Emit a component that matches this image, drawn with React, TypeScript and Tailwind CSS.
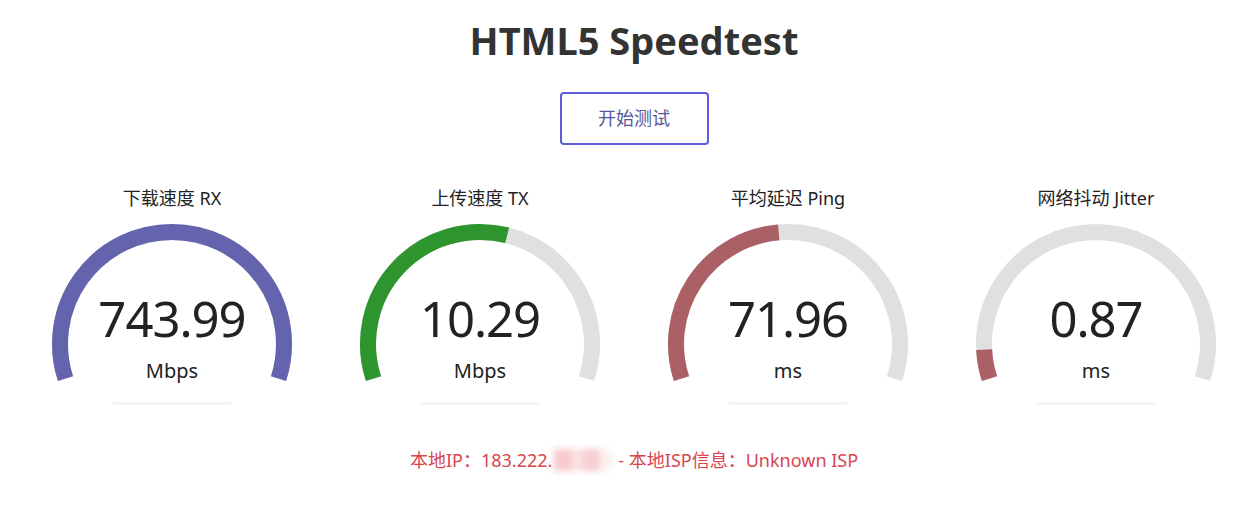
import React from 'react';

const FONT = '"Noto Sans", "Noto Sans CJK SC", sans-serif';

type Meter = {
  label: string;
  value: string;
  unit: string;
  color: string;
  fraction: number;
};

const meters: Meter[] = [
  { label: '下载速度 RX', value: '743.99', unit: 'Mbps', color: '#6464ae', fraction: 1 },
  { label: '上传速度 TX', value: '10.29', unit: 'Mbps', color: '#2e952e', fraction: 0.565 },
  { label: '平均延迟 Ping', value: '71.96', unit: 'ms', color: '#aa6064', fraction: 0.478 },
  { label: '网络抖动 Jitter', value: '0.87', unit: 'ms', color: '#aa6064', fraction: 0.07 },
];

// canvas-style angles: start at -198deg, sweep 216deg clockwise
const START = -198;
const SPAN = 216;

function arcPath(cx: number, cy: number, r: number, from: number, to: number) {
  const rad = (d: number) => (d * Math.PI) / 180;
  const x0 = cx + r * Math.cos(rad(from));
  const y0 = cy + r * Math.sin(rad(from));
  const x1 = cx + r * Math.cos(rad(to));
  const y1 = cy + r * Math.sin(rad(to));
  const large = to - from > 180 ? 1 : 0;
  return `M${x0.toFixed(2)} ${y0.toFixed(2)} A${r} ${r} 0 ${large} 1 ${x1.toFixed(2)} ${y1.toFixed(2)}`;
}

function Gauge({ meter }: { meter: Meter }) {
  const cx = 130;
  const cy = 130;
  const r = 112;
  return (
    <div className="flex w-[308px] flex-col items-center">
      <div className="text-[18px] leading-[24px] text-[#222]">{meter.label}</div>
      <div className="relative mt-[4px] h-[176px] w-[260px]">
        <svg width="260" height="176" viewBox="0 0 260 176" aria-hidden>
          <path d={arcPath(cx, cy, r, START, START + SPAN)} fill="none" stroke="#e0e0e0" strokeWidth="16" />
          <path
            d={arcPath(cx, cy, r, START, START + SPAN * meter.fraction)}
            fill="none"
            stroke={meter.color}
            strokeWidth="16"
          />
        </svg>
        <div className="absolute inset-x-0 top-[72px] text-center text-[49px] leading-[64px] tracking-[-1px] text-[#222]">
          {meter.value}
        </div>
        <div className="absolute inset-x-0 top-[143px] text-center text-[20px] leading-[28px] text-[#222]">
          {meter.unit}
        </div>
      </div>
      <div className="mt-[12px] h-[3px] w-[118px] bg-[#f4f4f7]" />
    </div>
  );
}

export default function App() {
  return (
    <div className="flex min-h-[515px] flex-col items-center bg-white pl-[12px]" style={{ fontFamily: FONT }}>
      <h1 className="pt-[14px] text-[38px] font-bold leading-[52px] text-[#333]">HTML5 Speedtest</h1>

      <button className="mt-[26px] h-[53px] w-[149px] rounded-[4px] border-2 border-[#5c5cd8] bg-white text-[18px] text-[#55559a]">
        开始测试
      </button>

      <div className="mt-[41px] flex">
        {meters.map((m) => (
          <Gauge key={m.label} meter={m} />
        ))}
      </div>

      <div className="mt-[43px] flex items-center text-[18px] leading-[24px] text-[#d9454f]">
        <span>本地IP：183.222.</span>
        <span className="ml-[2px] mr-[6px] flex h-[22px] w-[58px] blur-[3px]">
          <span className="h-full w-[18px] bg-[#f6c9cc]" />
          <span className="h-full w-[10px] bg-[#fbe3e4]" />
          <span className="h-full w-[18px] bg-[#f7d0d2]" />
          <span className="h-full w-[12px] bg-[#fdf0f0]" />
        </span>
        <span>- 本地ISP信息：Unknown ISP</span>
      </div>
    </div>
  );
}
